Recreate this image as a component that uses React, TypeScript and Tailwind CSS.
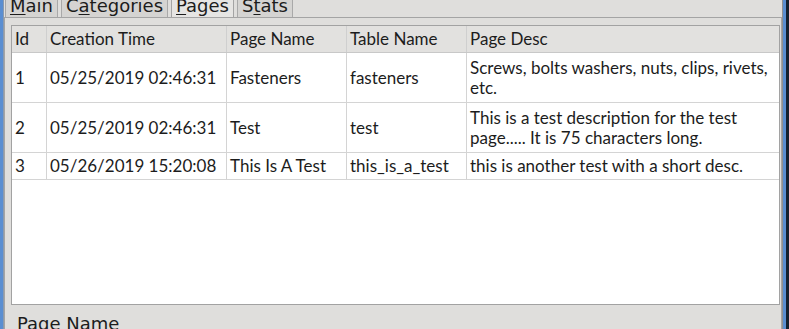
import React from "react";

const rows = [
  {
    id: "1",
    time: "05/25/2019 02:46:31",
    name: "Fasteners",
    table: "fasteners",
    desc: "Screws, bolts washers, nuts, clips, rivets, etc.",
    h: "h-[50px]",
  },
  {
    id: "2",
    time: "05/25/2019 02:46:31",
    name: "Test",
    table: "test",
    desc: "This is a test description for the test page..... It is 75 characters long.",
    h: "h-[50px]",
  },
  {
    id: "3",
    time: "05/26/2019 15:20:08",
    name: "This Is A Test",
    table: "this_is_a_test",
    desc: "this is another test with a short desc.",
    h: "h-[27px]",
  },
];

const tabs = [
  { pre: "", key: "M", post: "ain" },
  { pre: "C", key: "a", post: "tegories" },
  { pre: "", key: "P", post: "ages", active: true },
  { pre: "S", key: "t", post: "ats" },
];

const cols = "grid grid-cols-[35px_180px_120px_120px_1fr]";

export default function App() {
  return (
    <div className="flex h-[329px] w-[789px] overflow-hidden bg-[#dfdedc] text-[#1c1c1c] [font-family:'DejaVu_Sans',sans-serif]">
      {/* window edge */}
      <div className="w-[3px] bg-[#5a8ed1]" />
      <div className="w-[1px] bg-[#8a9aae]" />

      <div className="flex min-w-0 flex-1 flex-col">
        {/* tabs */}
        <div className="flex h-[17px] items-end pl-[1px]">
          {tabs.map((t) => (
            <div
              key={t.pre + t.key + t.post}
              className={
                "mr-[3px] flex h-[24px] items-end border-x border-t px-[4px] pb-[1px] text-[18px] leading-[20px] " +
                (t.active
                  ? "border-[#a4a4a4] bg-[#e6e5e3]"
                  : "border-[#a9a9a9] bg-[#d5d4d2]")
              }
            >
              <span>
                {t.pre}
                <span className="underline decoration-1 underline-offset-2">{t.key}</span>
                {t.post}
              </span>
            </div>
          ))}
        </div>

        {/* tab pane */}
        <div className="flex flex-1 flex-col border-l border-r border-t border-[#a4a4a4] pr-[1px]">
          <div className="ml-[6px] mt-[7px] flex h-[280px] flex-col border border-[#a2a2a2] bg-white [font-family:Lato,sans-serif] text-[17px]">
            <div className={cols + " h-[27px] border-b border-[#c8c8c8] bg-[#e2e1df]"}>
              {["Id", "Creation Time", "Page Name", "Table Name", "Page Desc"].map((h) => (
                <div key={h} className="flex items-center border-r border-[#cfcfcf] pl-[3px] last:border-r-0">
                  {h}
                </div>
              ))}
            </div>
            {rows.map((r) => (
              <div key={r.id} className={cols + " border-b border-[#d4d4d4] " + r.h}>
                <div className="flex items-center border-r border-[#d4d4d4] pl-[3px]">{r.id}</div>
                <div className="flex items-center border-r border-[#d4d4d4] pl-[3px]">{r.time}</div>
                <div className="flex items-center border-r border-[#d4d4d4] pl-[3px]">{r.name}</div>
                <div className="flex items-center border-r border-[#d4d4d4] pl-[3px]">{r.table}</div>
                <div className="flex items-center pl-[3px] pr-[6px] leading-[20px]">{r.desc}</div>
              </div>
            ))}
          </div>

          <div className="ml-[12px] mt-[9px] text-[18px] leading-[20px]">Page Name</div>
        </div>
      </div>

      {/* right window edge */}
      <div className="w-[1px] bg-[#8f8f8f]" />
      <div className="w-[3px] bg-[#5a8ed1]" />
      <div className="w-[3px] bg-[#13202e]" />
    </div>
  );
}
